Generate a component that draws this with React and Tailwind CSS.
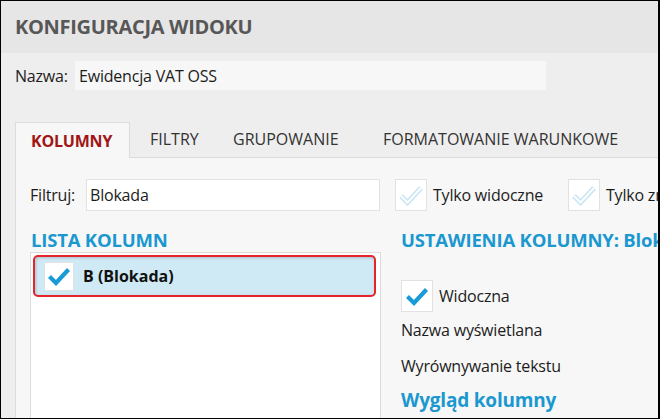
import React from 'react';

const Check = ({ light = false }) => (
  light ? (
    <svg width="26" height="22" viewBox="0 0 26 22" fill="none">
      <path d="M3 12 L9.5 18.5 L23 4" stroke="#c6e4f4" strokeWidth="5" strokeLinejoin="miter" />
      <path d="M3 12 L9.5 18.5 L23 4" stroke="#ffffff" strokeWidth="2" strokeLinejoin="miter" />
    </svg>
  ) : (
    <svg width="24" height="20" viewBox="0 0 24 20" fill="none">
      <path d="M2.5 10.5 L9 17 L21.5 3.5" stroke="#1b9ad8" strokeWidth="4.2" strokeLinejoin="miter" />
    </svg>
  )
);

const CheckBox = ({ light, size = 'w-[32px] h-[32px]' }) => (
  <div className={`${size} shrink-0 bg-white border border-[#e2e2e2] flex items-center justify-center`}>
    <Check light={light} />
  </div>
);

export default function App() {
  return (
    <div className="w-[660px] h-[419px] overflow-hidden border-t border-l border-b border-r-2 border-black bg-[#eeeeee] font-['Open_Sans',sans-serif] text-[#1c1c1c] flex flex-col">
      {/* Header */}
      <div className="h-[52px] shrink-0 bg-[#e6e6e6] pl-[14px] flex items-center">
        <h1 className="text-[20px] font-bold text-[#575757] tracking-[-0.3px]">KONFIGURACJA WIDOKU</h1>
      </div>

      {/* Name */}
      <div className="mt-[8px] pl-[14px] flex items-center text-[16px] tracking-[-0.2px]">
        <span className="w-[60px] shrink-0">Nazwa:</span>
        <div className="w-[471px] h-[29px] shrink-0 bg-[#f7f7f7] flex items-center pl-[4px]">Ewidencja VAT OSS</div>
      </div>

      {/* Tabs */}
      <div className="mt-[31px] ml-[14px] flex items-end border-b border-[#dcdcdc] text-[16px] whitespace-nowrap">
        <div className="w-[115px] h-[36px] shrink-0 bg-[#f7f7f7] border border-b-0 border-[#dcdcdc] flex items-center pl-[15px] font-bold text-[#a01616] tracking-[-0.2px] -mb-px">
          KOLUMNY
        </div>
        <div className="w-[83px] h-[36px] shrink-0 flex items-center pl-[20px] text-[#333]">FILTRY</div>
        <div className="w-[150px] h-[36px] shrink-0 flex items-center pl-[20px] text-[#333]">GRUPOWANIE</div>
        <div className="h-[36px] shrink-0 flex items-center pl-[20px] text-[#333]">FORMATOWANIE WARUNKOWE</div>
      </div>

      {/* Panel */}
      <div className="flex-1 ml-[14px] bg-[#f7f7f7] border-l border-[#dcdcdc] pl-[14px] pt-[21px] whitespace-nowrap">
        <div className="flex items-center text-[16px] tracking-[-0.2px]">
          <span className="w-[56px] shrink-0">Filtruj:</span>
          <div className="w-[294px] h-[32px] shrink-0 bg-white border border-[#e2e2e2] flex items-center pl-[3px]">Blokada</div>
          <div className="ml-[15px] shrink-0"><CheckBox light /></div>
          <span className="ml-[6px] w-[135px] shrink-0">Tylko widoczne</span>
          <CheckBox light />
          <span className="ml-[6px] shrink-0">Tylko zmienione</span>
        </div>

        <div className="flex mt-[17px]">
          {/* Column list */}
          <div className="w-[351px] shrink-0 flex flex-col">
            <h2 className="h-[24px] leading-[24px] pl-[1px] text-[18.5px] font-bold text-[#1a98cf] tracking-[-0.2px]">LISTA KOLUMN</h2>
            <div className="h-[200px] bg-white border border-[#dcdcdc] pt-[2px] pl-[2px]">
              <div className="w-[343px] h-[42px] rounded-[5px] border-2 border-[#e5242b] bg-[#cfe9f5] shadow-[inset_1px_1px_3px_rgba(0,0,0,0.18)] flex items-center pl-[9px]">
                <CheckBox size="w-[30px] h-[29px]" />
                <span className="ml-[9px] text-[16px] font-bold text-[#111]">B (Blokada)</span>
              </div>
            </div>
          </div>

          {/* Column settings */}
          <div className="ml-[20px] flex flex-col shrink-0">
            <h2 className="h-[24px] leading-[24px] text-[18.5px] font-bold text-[#1a98cf] tracking-[-0.2px]">USTAWIENIA KOLUMNY: Blokada</h2>
            <div className="mt-[28px] flex items-center text-[16px] tracking-[-0.2px]">
              <CheckBox />
              <span className="ml-[6px]">Widoczna</span>
            </div>
            <div className="h-[36px] flex items-center text-[16px] tracking-[-0.2px]">Nazwa wyświetlana</div>
            <div className="h-[36px] flex items-center text-[16px] tracking-[-0.2px]">Wyrównywanie tekstu</div>
            <div className="h-[32px] flex items-center text-[19px] font-bold text-[#1a98cf] tracking-[-0.2px]">Wygląd kolumny</div>
          </div>
        </div>
      </div>
    </div>
  );
}
